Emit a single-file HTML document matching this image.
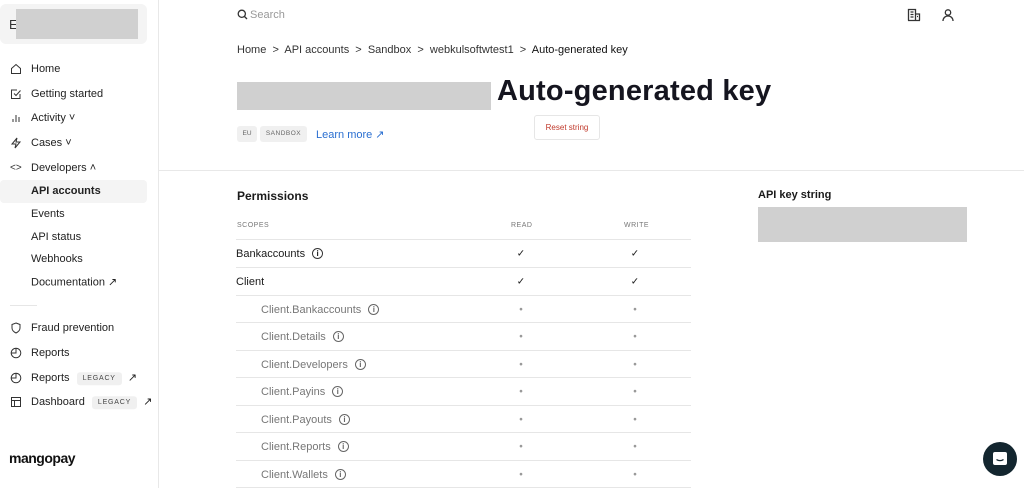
<!DOCTYPE html>
<html><head><style>
*{box-sizing:border-box;margin:0;padding:0}
body{width:1024px;height:488px;overflow:hidden;background:#fff;font-family:"Liberation Sans",sans-serif;color:#1a1a1a;position:relative}
.a{position:absolute;white-space:nowrap}
.sb{position:absolute;left:0;top:0;width:159px;height:488px;border-right:1px solid #e8e8e8}
.ni{position:absolute;left:31px;font-size:11px;color:#222;transform:translateY(-50%)}
.ic{position:absolute;left:10px;transform:translateY(-50%)}
.tag{display:inline-block;background:#f0f0f0;border-radius:3px;font-size:7px;letter-spacing:.8px;padding:3px 6px;color:#444;margin-left:4px;vertical-align:middle}
.row{position:absolute;left:236px;width:455px;border-top:1px solid #e6e6e6;height:28px}
.row span{position:absolute;top:50%;transform:translateY(-50%);font-size:11px}
.ck{position:absolute;font-size:10px;font-weight:normal;transform:translate(-50%,-50%);top:50%}
.info{display:inline-block;width:11px;height:11px;border:1px solid #333;border-radius:50%;font-size:8px;text-align:center;line-height:9px;vertical-align:middle;margin-left:4px;font-weight:bold}
</style></head><body>
<div class="sb">
 <div class="a" style="left:0;top:4px;width:147px;height:40px;background:#f4f4f4;border-radius:6px"></div>
 <div class="a" style="left:9px;top:17px;font-size:13px;color:#333">E</div>
 <div class="a" style="left:16px;top:9px;width:122px;height:30px;background:#d0d0d0"></div>
 <div class="a" style="left:0;top:180px;width:147px;height:23px;background:#f4f4f4;border-radius:4px"></div>
 <svg class="ic" style="top:69px" width="12" height="12" viewBox="0 0 12 12" fill="none" stroke="#333"><path d="M1.5 5.5L6 1.5l4.5 4v5h-9z"/></svg><div class="ni" style="top:69px">Home</div>
 <svg class="ic" style="top:94px" width="12" height="12" viewBox="0 0 12 12" fill="none" stroke="#333"><path d="M10 6v4.5H1.5V2H7M4 5.5l2 2 4.5-5"/></svg><div class="ni" style="top:94px">Getting started</div>
 <svg class="ic" style="top:118px" width="12" height="12" viewBox="0 0 12 12" fill="none" stroke="#333"><path d="M3 7v3M6 3v7M9 5v5"/></svg><div class="ni" style="top:118px">Activity &#709;</div>
 <svg class="ic" style="top:143px" width="12" height="12" viewBox="0 0 12 12" fill="none" stroke="#333"><path d="M7 1L2 7h4l-1 4 5-6H6z"/></svg><div class="ni" style="top:143px">Cases &#709;</div>
 <div class="ic" style="top:168px;font-size:10px;color:#333">&lt;&gt;</div><div class="ni" style="top:168px">Developers &#708;</div>
 <div class="ni" style="top:191px;font-weight:bold">API accounts</div>
 <div class="ni" style="top:214px">Events</div>
 <div class="ni" style="top:237px">API status</div>
 <div class="ni" style="top:259px">Webhooks</div>
 <div class="ni" style="top:282px">Documentation &#8599;</div>
 <div class="a" style="left:10px;top:305px;width:27px;height:1px;background:#e6e6e6"></div>
 <svg class="ic" style="top:328px" width="12" height="12" viewBox="0 0 12 12" fill="none" stroke="#333"><path d="M6 1l4 1.5V6c0 2.5-2 4-4 5C4 10 2 8.5 2 6V2.5z"/></svg><div class="ni" style="top:328px">Fraud prevention</div>
 <svg class="ic" style="top:353px" width="12" height="12" viewBox="0 0 12 12" fill="none" stroke="#333"><circle cx="6" cy="6" r="4.8"/><path d="M6 1.2V6H1.2"/></svg><div class="ni" style="top:353px">Reports</div>
 <svg class="ic" style="top:378px" width="12" height="12" viewBox="0 0 12 12" fill="none" stroke="#333"><circle cx="6" cy="6" r="4.8"/><path d="M6 1.2V6H1.2"/></svg><div class="ni" style="top:378px">Reports <span class="tag">LEGACY</span> &nbsp;&#8599;</div>
 <svg class="ic" style="top:402px" width="12" height="12" viewBox="0 0 12 12" fill="none" stroke="#333"><rect x="1.5" y="1.5" width="9" height="9"/><path d="M1.5 4.5h9M4.5 4.5v6"/></svg><div class="ni" style="top:402px">Dashboard <span class="tag">LEGACY</span> &nbsp;&#8599;</div>
 <div class="a" style="left:9px;top:450px;font-size:14px;font-weight:bold;letter-spacing:-.5px;color:#111">mangopay</div>
</div>

<svg class="a" style="left:237px;top:9px" width="11" height="11" viewBox="0 0 11 11" fill="none" stroke="#333" stroke-width="1.3"><circle cx="4.8" cy="4.8" r="3.6"/><path d="M7.5 7.5l2.5 2.5"/></svg>
<div class="a" style="left:250px;top:9px;font-size:11px;color:#999">Search</div>
<svg class="a" style="left:907px;top:8px" width="14" height="14" viewBox="0 0 14 14" fill="none" stroke="#333" stroke-width="1.3"><path d="M1.5 12.5V1.5h7v11M8.5 6h4v6.5M1 12.5h12M3.5 4h3M3.5 6.5h3M3.5 9h3M10 8.5h1"/></svg>
<svg class="a" style="left:941px;top:8px" width="14" height="14" viewBox="0 0 14 14" fill="none" stroke="#333" stroke-width="1.3"><circle cx="7" cy="4.5" r="2.7"/><path d="M2 13c0-3 2.2-5 5-5s5 2 5 5"/></svg>

<div class="a" style="left:237px;top:44px;font-size:11px;color:#333">Home &nbsp;&gt;&nbsp; API accounts &nbsp;&gt;&nbsp; Sandbox &nbsp;&gt;&nbsp; webkulsoftwtest1 &nbsp;&gt;&nbsp; <span style="color:#111">Auto-generated key</span></div>
<div class="a" style="left:237px;top:82px;width:254px;height:28px;background:#d0d0d0"></div>
<div class="a" style="left:497px;top:75px;font-size:29px;font-weight:bold;color:#15151f;letter-spacing:.2px">Auto-generated key</div>
<div class="a" style="left:534px;top:115px;width:66px;height:25px;border:1px solid #e6e6e6;border-radius:3px;font-size:8px;color:#c0392b;text-align:center;line-height:23px">Reset string</div>
<div class="a" style="left:237px;top:126px;width:20px;height:16px;background:#f0f0f0;border-radius:3px;font-size:6.5px;color:#666;text-align:center;line-height:16px">EU</div>
<div class="a" style="left:260px;top:126px;width:47px;height:16px;background:#f0f0f0;border-radius:3px;font-size:6.5px;color:#666;text-align:center;line-height:16px;letter-spacing:.5px">SANDBOX</div>
<div class="a" style="left:316px;top:128px;font-size:11px;color:#2a6fd1">Learn more &#8599;</div>
<div class="a" style="left:159px;top:170px;width:865px;height:1px;background:#e8e8e8"></div>

<div class="a" style="left:237px;top:189px;font-size:12px;font-weight:bold">Permissions</div>
<div class="a" style="left:237px;top:222px;font-size:7px;color:#777;letter-spacing:.5px">SCOPES</div>
<div class="a" style="left:511px;top:222px;font-size:7px;color:#777;letter-spacing:.5px">READ</div>
<div class="a" style="left:624px;top:222px;font-size:7px;color:#777;letter-spacing:.5px">WRITE</div>

<div class="row" style="top:239px"><span style="left:0">Bankaccounts <i class="info" style="font-style:normal">i</i></span><b class="ck" style="left:285px">&#10003;</b><b class="ck" style="left:399px">&#10003;</b></div>
<div class="row" style="top:267px"><span style="left:0">Client</span><b class="ck" style="left:285px">&#10003;</b><b class="ck" style="left:399px">&#10003;</b></div>
<div class="row" style="top:295px"><span style="left:25px;color:#777">Client.Bankaccounts <i class="info" style="font-style:normal;border-color:#666;color:#666">i</i></span><b class="ck" style="left:285px;color:#999">&#8226;</b><b class="ck" style="left:399px;color:#999">&#8226;</b></div>
<div class="row" style="top:322px"><span style="left:25px;color:#777">Client.Details <i class="info" style="font-style:normal;border-color:#666;color:#666">i</i></span><b class="ck" style="left:285px;color:#999">&#8226;</b><b class="ck" style="left:399px;color:#999">&#8226;</b></div>
<div class="row" style="top:350px"><span style="left:25px;color:#777">Client.Developers <i class="info" style="font-style:normal;border-color:#666;color:#666">i</i></span><b class="ck" style="left:285px;color:#999">&#8226;</b><b class="ck" style="left:399px;color:#999">&#8226;</b></div>
<div class="row" style="top:377px"><span style="left:25px;color:#777">Client.Payins <i class="info" style="font-style:normal;border-color:#666;color:#666">i</i></span><b class="ck" style="left:285px;color:#999">&#8226;</b><b class="ck" style="left:399px;color:#999">&#8226;</b></div>
<div class="row" style="top:405px"><span style="left:25px;color:#777">Client.Payouts <i class="info" style="font-style:normal;border-color:#666;color:#666">i</i></span><b class="ck" style="left:285px;color:#999">&#8226;</b><b class="ck" style="left:399px;color:#999">&#8226;</b></div>
<div class="row" style="top:432px"><span style="left:25px;color:#777">Client.Reports <i class="info" style="font-style:normal;border-color:#666;color:#666">i</i></span><b class="ck" style="left:285px;color:#999">&#8226;</b><b class="ck" style="left:399px;color:#999">&#8226;</b></div>
<div class="row" style="top:460px"><span style="left:25px;color:#777">Client.Wallets <i class="info" style="font-style:normal;border-color:#666;color:#666">i</i></span><b class="ck" style="left:285px;color:#999">&#8226;</b><b class="ck" style="left:399px;color:#999">&#8226;</b></div>
<div class="a" style="left:236px;top:487px;width:455px;height:1px;background:#e6e6e6"></div>

<div class="a" style="left:758px;top:189px;font-size:11px;font-weight:bold">API key string</div>
<div class="a" style="left:758px;top:207px;width:209px;height:35px;background:#d0d0d0"></div>

<div class="a" style="left:983px;top:442px;width:34px;height:34px;border-radius:50%;background:#13262f"></div>
<svg class="a" style="left:992px;top:451px" width="16" height="16" viewBox="0 0 16 16"><rect x="1" y="1" width="14" height="13" rx="2" fill="#fff"/><path d="M4.5 8.5c2 1.5 5 1.5 7 0" stroke="#13262f" stroke-width="1.3" fill="none"/></svg>
</body></html>
